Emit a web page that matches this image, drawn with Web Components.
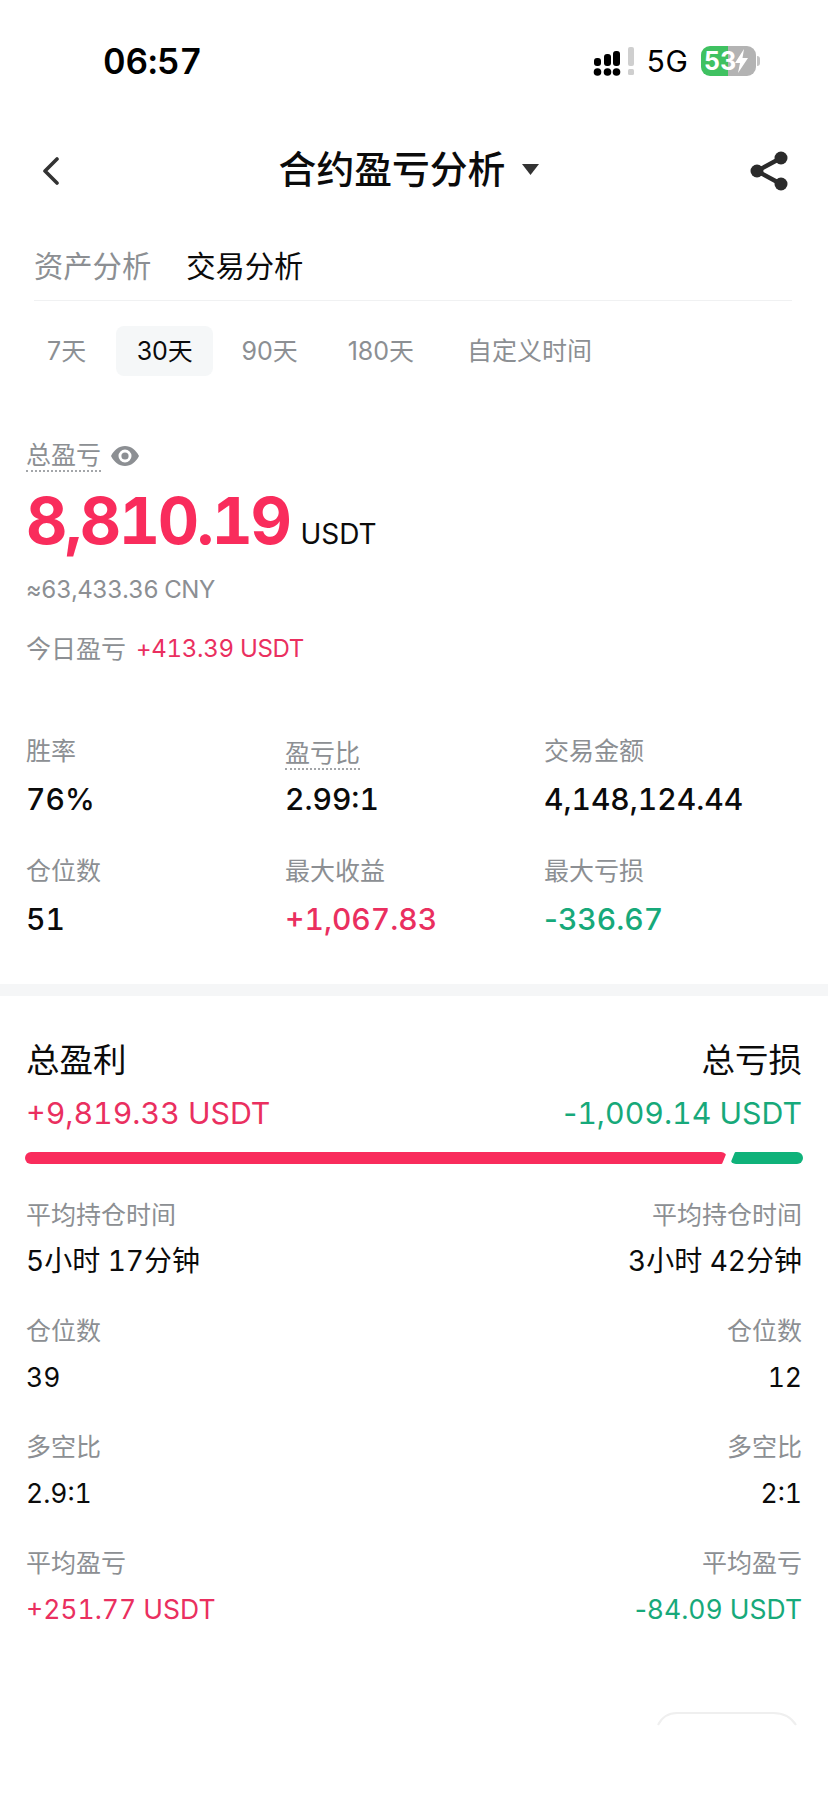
<!DOCTYPE html>
<html lang="zh">
<head>
<meta charset="utf-8">
<title>合约盈亏分析</title>
<style>
  html, body { margin: 0; background: #fff; }
  body { font-family: Inter, "Noto Sans CJK SC", sans-serif; font-variant-numeric: tabular-nums; color: #0b0b0b; }
  .band { display: block; height: 12px; background: #f5f6f7; }
  .minus { font-variant-numeric: normal; }
</style>
</head>
<body>
<status-bar></status-bar>
<nav-bar>合约盈亏分析</nav-bar>
<tab-row></tab-row>
<period-row></period-row>
<total-pnl></total-pnl>
<stat-grid>
  <stat-cell label="胜率">76%</stat-cell>
  <stat-cell label="盈亏比" dotted>2.99:1</stat-cell>
  <stat-cell label="交易金额">4,148,124.44</stat-cell>
  <stat-cell label="仓位数">51</stat-cell>
  <stat-cell label="最大收益" tone="up">+1,067.83</stat-cell>
  <stat-cell label="最大亏损" tone="down"><span class="minus">-</span>336.67</stat-cell>
</stat-grid>
<div class="band"></div>
<split-summary>
  <split-row label="平均持仓时间" left="5小时 17分钟" right="3小时 42分钟" wide></split-row>
  <split-row label="仓位数" left="39" right="12"></split-row>
  <split-row label="多空比" left="2.9:1" right="2:1"></split-row>
  <split-row label="平均盈亏" left="+251.77 USDT" right="-84.09 USDT" toned></split-row>
</split-summary>
<floating-tab></floating-tab>

<script>
  class StatusBar extends HTMLElement {
    static TAG = "status-bar";
    constructor() {
      super();
      this.attachShadow({ mode: "open" });
      this.shadowRoot.innerHTML = `
      <style>
        :host { display: flex; align-items: center; height: 122px; padding: 0 68px 0 103px; }
        .time { font-size: 35px; font-weight: 600; letter-spacing: -0.2px; color: #000; }
        .right { margin-left: auto; display: flex; align-items: center; }
        svg { display: block; }
        .net { font-size: 30px; font-weight: 400; margin: 0 13px 0 11px; color: #000; line-height: 30px; }
        .battery { position: relative; display: flex; align-items: center; width: 55px; height: 30px; border-radius: 9px; background: linear-gradient(90deg, #3fc161 0 27px, #b3b3b3 27px); color: #fff; font-size: 25px; font-weight: 700; line-height: 30px; padding-left: 3px; box-sizing: border-box; }
        .battery svg { margin-left: -2px; }
        .nub { width: 3px; height: 10px; margin-left: 1px; background: #c4c4c4; border-radius: 0 3px 3px 0; }
      </style>
      <span class="time">06:57</span>
      <div class="right">
        <svg width="42" height="29" viewBox="0 0 42 29">
          <g fill="#000">
            <rect x="1" y="11" width="7" height="8" rx="3"/><rect x="11" y="7" width="7" height="12" rx="3"/><rect x="20" y="4" width="7" height="15" rx="3"/>
            <circle cx="4.5" cy="25" r="3.8"/><circle cx="14.5" cy="25" r="3.8"/><circle cx="23.5" cy="25" r="3.8"/>
          </g>
          <g fill="#cfcfcf"><rect x="35" y="0" width="6" height="19" rx="2"/><rect x="35" y="22" width="6" height="6" rx="1.5"/></g>
        </svg>
        <span class="net">5G</span>
        <div class="battery">53<svg width="15" height="24" viewBox="0 0 15 24"><path fill="#fff" d="M10 0 1 14h5l-2 10 10-15H8.500z"/></svg></div>
        <span class="nub"></span>
      </div>`;
    }
  }
  customElements.define(StatusBar.TAG, StatusBar);

  class NavBar extends HTMLElement {
    static TAG = "nav-bar";
    constructor() {
      super();
      this.attachShadow({ mode: "open" });
      this.shadowRoot.innerHTML = `
      <style>
        :host { display: flex; align-items: center; height: 98px; padding: 0 40px 0 42px; }
        .title { flex: 1; display: flex; align-items: center; justify-content: center; gap: 17px; font-size: 37.800px; font-weight: 500; line-height: 44px; color: #0b0b0b; margin: -4px 0 0 8px; }
        svg { display: block; }
      </style>
      <svg width="18" height="28" viewBox="0 0 18 28"><path d="M15 2 3 14l12 12" fill="none" stroke="#333" stroke-width="3.600" stroke-linecap="round" stroke-linejoin="round"/></svg>
      <div class="title"><slot></slot>
        <svg width="17" height="11" viewBox="0 0 17 11"><path d="M0 0h17L8.500 11z" fill="#333"/></svg>
      </div>
      <svg width="38" height="40" viewBox="0 0 38 40" fill="#2b2b2b">
        <circle cx="31" cy="7" r="6.500"/><circle cx="31" cy="33" r="6.500"/><circle cx="7" cy="20" r="6.500"/>
        <path d="M7 20 31 7M7 20l24 13" stroke="#2b2b2b" stroke-width="4.500"/>
      </svg>`;
    }
  }
  customElements.define(NavBar.TAG, NavBar);

  class TabRow extends HTMLElement {
    static TAG = "tab-row";
    constructor() {
      super();
      this.attachShadow({ mode: "open" });
      this.shadowRoot.innerHTML = `
      <style>
        :host { display: flex; gap: 35px; margin: 0 36px 0 34px; padding: 27px 0 13px; border-bottom: 1px solid #f0f1f2; font-size: 29.300px; line-height: 40px; color: #8c8f93; }
        .active { color: #0b0b0b; }
      </style>
      <span>资产分析</span>
      <span class="active">交易分析</span>`;
    }
  }
  customElements.define(TabRow.TAG, TabRow);

  class PeriodRow extends HTMLElement {
    static TAG = "period-row";
    constructor() {
      super();
      this.attachShadow({ mode: "open" });
      this.shadowRoot.innerHTML = `
      <style>
        :host { display: flex; margin: 25px 0 0 26px; font-size: 25px; font-variant-numeric: normal; line-height: 50px; color: #8c8f93; }
        span { padding: 0 21px; border-radius: 8px; }
        .active { margin-left: 9px; padding: 0 20.500px; background: #f5f7f8; color: #0b0b0b; }
        .ninety { margin-left: 7px; }
        .oneeighty { padding-left: 29px; }
        .custom { padding-left: 32px; }
      </style>
      <span>7天</span><span class="active">30天</span><span class="ninety">90天</span><span class="oneeighty">180天</span><span class="custom">自定义时间</span>`;
    }
  }
  customElements.define(PeriodRow.TAG, PeriodRow);

  class TotalPnl extends HTMLElement {
    static TAG = "total-pnl";
    constructor() {
      super();
      this.attachShadow({ mode: "open" });
      this.shadowRoot.innerHTML = `
      <style>
        :host { display: block; padding: 64px 26px 0; }
        .head { display: flex; align-items: center; gap: 10px; height: 32px; }
        .label { font-size: 25px; line-height: 30px; color: #8c8f93; border-bottom: 2px dotted #a3a6a9; }
        svg { display: block; }
        .amount { display: flex; align-items: baseline; gap: 11px; height: 70px; line-height: 70px; margin-top: 14px; }
        .big { font-size: 64px; font-weight: 700; color: #f92c5c; letter-spacing: -2.400px; }
        .unit { font-size: 28px; color: #0b0b0b; }
        .cny { margin-top: 18px; font-size: 24px; letter-spacing: -0.500px; line-height: 32px; color: #8c8f93; }
        .today { display: flex; gap: 10px; margin-top: 27px; font-size: 25px; line-height: 32px; color: #8c8f93; }
        .today b { font-size: 24px; letter-spacing: -0.300px; font-weight: 400; color: #ea2f5f; }
      </style>
      <div class="head"><span class="label">总盈亏</span>
        <svg width="28" height="20" viewBox="0 0 28 20"><path fill="#8c8f93" fill-rule="evenodd" d="M14 0c6 0 11 4 14 10-3 6-8 10-14 10S3 16 0 10C3 4 8 0 14 0zm0 3.500a6.500 6.500 0 1 0 0 13 6.500 6.500 0 0 0 0-13z"/><circle cx="14" cy="10" r="3.600" fill="#8c8f93"/></svg>
      </div>
      <div class="amount"><span class="big">8,810.19</span><span class="unit">USDT</span></div>
      <div class="cny">≈63,433.36 CNY</div>
      <div class="today"><span>今日盈亏</span><b>+413.39 USDT</b></div>`;
    }
  }
  customElements.define(TotalPnl.TAG, TotalPnl);

  class StatGrid extends HTMLElement {
    static TAG = "stat-grid";
    constructor() {
      super();
      this.attachShadow({ mode: "open" });
      this.shadowRoot.innerHTML = `
      <style>
        :host { display: grid; grid-template-columns: 259px 259px 1fr; row-gap: 36px; padding: 70px 26px 45px; }
      </style>
      <slot></slot>`;
    }
  }
  customElements.define(StatGrid.TAG, StatGrid);

  class StatCell extends HTMLElement {
    static TAG = "stat-cell";
    constructor() {
      super();
      this.attachShadow({ mode: "open" });
      this.shadowRoot.innerHTML = `
      <style>
        :host { display: block; }
        .label { display: block; height: 32px; }
        .label span { font-size: 25px; line-height: 32px; color: #8c8f93; }
        :host([dotted]) .label span { border-bottom: 2px dotted #a3a6a9; line-height: 30px; display: inline-block; margin-top: 3px; }
        .value { margin-top: 12px; font-size: 30px; line-height: 40px; font-weight: 500; color: #0b0b0b; }
        :host([tone="up"]) .value { color: #ea2f5f; }
        :host([tone="down"]) .value { color: #17a97a; }
      </style>
      <div class="label"><span></span></div>
      <div class="value"><slot></slot></div>`;
      this.shadowRoot.querySelector(".label span").textContent = this.getAttribute("label");
    }
  }
  customElements.define(StatCell.TAG, StatCell);

  class SplitSummary extends HTMLElement {
    static TAG = "split-summary";
    constructor() {
      super();
      this.attachShadow({ mode: "open" });
      this.shadowRoot.innerHTML = `
      <style>
        :host { display: block; padding: 42px 26px 0 26px; }
        .line { display: flex; justify-content: space-between; }
        .head { font-size: 33.500px; line-height: 44px; color: #0b0b0b; }
        .sum { margin-top: 11px; font-size: 30.300px; line-height: 40px; }
        .up { color: #ea2f5f; } .down { color: #17a97a; }
        .minus { font-variant-numeric: normal; }
        .bar { display: flex; gap: 3px; height: 12px; margin: 19px -1px 35px -1px; }
        .bar i { display: block; border-radius: 6px; }
        .bar .loss { width: 73px; background: #0fb27a; clip-path: polygon(5px 0, 100% 0, 100% 100%, 0 100%); }
        .bar .gain { flex: 1; background: #f92c5c; clip-path: polygon(0 0, 100% 0, calc(100% - 5px) 100%, 0 100%); }
        .rows { display: flex; flex-direction: column; gap: 36px; }
      </style>
      <div class="line head"><span>总盈利</span><span>总亏损</span></div>
      <div class="line sum"><span class="up">+9,819.33 USDT</span><span class="down"><span class="minus">-</span>1,009.14 USDT</span></div>
      <div class="bar"><i class="gain"></i><i class="loss"></i></div>
      <div class="rows"><slot></slot></div>`;
    }
  }
  customElements.define(SplitSummary.TAG, SplitSummary);

  class SplitRow extends HTMLElement {
    static TAG = "split-row";
    constructor() {
      super();
      this.attachShadow({ mode: "open" });
      this.shadowRoot.innerHTML = `
      <style>
        :host { display: block; }
        .line { display: flex; justify-content: space-between; }
        .label { font-size: 25px; line-height: 32px; color: #8c8f93; }
        .value { margin-top: 12px; font-size: 26.500px; line-height: 36px; color: #0b0b0b; }
        .minus { font-variant-numeric: normal; }
        :host([wide]) .value { font-size: 28px; }
        :host([toned]) .value .a { color: #ea2f5f; }
        :host([toned]) .value .b { color: #17a97a; }
      </style>
      <div class="line label"><span class="l"></span><span class="l"></span></div>
      <div class="line value"><span class="a"></span><span class="b"></span></div>`;
      this.shadowRoot.querySelectorAll(".l").forEach(el => el.textContent = this.getAttribute("label"));
      this.shadowRoot.querySelector(".a").textContent = this.getAttribute("left");
      this.shadowRoot.querySelector(".b").innerHTML = this.getAttribute("right").replace(/^-/, '<span class="minus">-</span>');
    }
  }
  customElements.define(SplitRow.TAG, SplitRow);

  class FloatingTab extends HTMLElement {
    static TAG = "floating-tab";
    constructor() {
      super();
      this.attachShadow({ mode: "open" });
      this.shadowRoot.innerHTML = `
      <style>
        :host { display: block; width: 140px; margin: 85px 31px 0 auto; }
        svg { display: block; }
      </style>
      <svg width="140" height="14" viewBox="0 0 140 14"><path d="M1 13C5 5 11 1 20 1h96c11 0 18 4 23 12" fill="none" stroke="#efefef" stroke-width="2"/></svg>`;
    }
  }
  customElements.define(FloatingTab.TAG, FloatingTab);
</script>
</body>
</html>
